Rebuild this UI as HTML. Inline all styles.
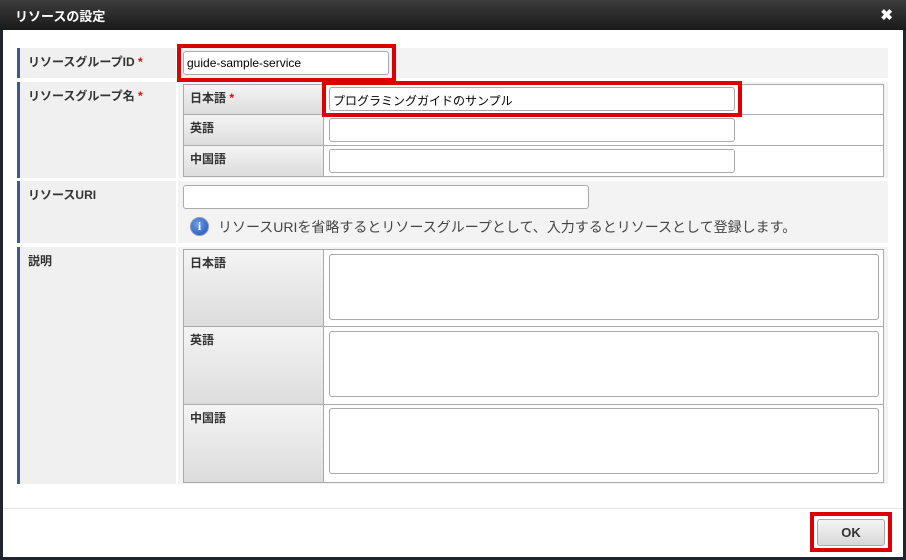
<!DOCTYPE html>
<html><head><meta charset="utf-8"><style>
*{box-sizing:border-box;margin:0;padding:0}
body{width:906px;height:560px;background:#1e2430;position:relative;overflow:hidden;font-family:"Liberation Sans","Noto Sans CJK JP",sans-serif;font-size:12px;color:#333}
.a{position:absolute}
.title{left:0;top:0;width:906px;height:30px;background:linear-gradient(#3c3c3c,#1a1a1a);color:#fff;font-weight:bold;font-size:13px;padding:6px 0 0 15px}
.x{right:13px;top:6px;color:#fff;font-weight:bold;font-size:15px}
.body{left:3px;top:30px;width:900px;height:527px;background:#fff}
.lab{background:#f0f0f0;border-left:3px solid #3b5998;font-weight:bold;color:#333;padding:5px 0 0 8px;font-size:12px}
.val{background:#f3f3f3}
.star{color:#e00}
.in{background:#fff;border:1px solid #aaa;border-radius:3px}
.th{background:linear-gradient(#f4f4f4,#dcdcdc);border:1px solid #aaa;font-weight:bold;padding:4px 0 0 6px;font-size:12px}
.td{background:#fff;border:1px solid #aaa;border-left:none}
.red{border:4px solid #d00}
</style></head><body>
<div class="a title">リソースの設定</div>
<div class="a x">✖</div>
<div class="a body"></div>
<div class="a lab" style="left:17px;top:48px;width:159px;height:30px">リソースグループID <span class="star">*</span></div>
<div class="a val" style="left:178px;top:48px;width:710px;height:30px"></div>
<div class="a in" style="left:183px;top:51px;width:206px;height:24px;padding:4px 3px;font-size:12px;color:#000">guide-sample-service</div>
<div class="a red" style="left:177px;top:44px;width:219px;height:38px"></div>
<div class="a lab" style="left:17px;top:82px;width:159px;height:96px">リソースグループ名 <span class="star">*</span></div>
<div class="a val" style="left:178px;top:82px;width:710px;height:96px"></div>
<div class="a th" style="left:183px;top:84px;width:141px;height:31px">日本語 <span class="star">*</span></div>
<div class="a td" style="left:324px;top:84px;width:560px;height:31px"></div>
<div class="a th" style="left:183px;top:115px;width:141px;height:31px;border-top:none">英語</div>
<div class="a td" style="left:324px;top:115px;width:560px;height:31px;border-top:none"></div>
<div class="a th" style="left:183px;top:146px;width:141px;height:31px;border-top:none">中国語</div>
<div class="a td" style="left:324px;top:146px;width:560px;height:31px;border-top:none"></div>
<div class="a in" style="left:329px;top:87px;width:406px;height:24px;padding:4px 3px;color:#000">プログラミングガイドのサンプル</div>
<div class="a in" style="left:329px;top:118px;width:406px;height:24px"></div>
<div class="a in" style="left:329px;top:149px;width:406px;height:24px"></div>
<div class="a red" style="left:322px;top:81px;width:420px;height:36px"></div>
<div class="a lab" style="left:17px;top:181px;width:159px;height:62px">リソースURI</div>
<div class="a val" style="left:178px;top:181px;width:710px;height:62px"></div>
<div class="a in" style="left:183px;top:185px;width:406px;height:24px"></div>
<div class="a" style="left:190px;top:217px;width:19px;height:19px;border-radius:50%;background:radial-gradient(circle at 40% 35%,#6fa0ea,#1d4fb0);border:1px solid #8899bb;color:#fff;font-weight:bold;font-size:12px;text-align:center;line-height:17px;font-family:'Liberation Serif',serif">i</div>
<div class="a" style="left:218px;top:217px;font-size:14px;color:#444">リソースURIを省略するとリソースグループとして、入力するとリソースとして登録します。</div>
<div class="a lab" style="left:17px;top:247px;width:159px;height:237px">説明</div>
<div class="a val" style="left:178px;top:247px;width:710px;height:237px"></div>
<div class="a th" style="left:183px;top:249px;width:141px;height:78px">日本語</div>
<div class="a td" style="left:324px;top:249px;width:560px;height:78px"></div>
<div class="a th" style="left:183px;top:327px;width:141px;height:78px;border-top:none">英語</div>
<div class="a td" style="left:324px;top:327px;width:560px;height:78px;border-top:none"></div>
<div class="a th" style="left:183px;top:405px;width:141px;height:78px;border-top:none">中国語</div>
<div class="a td" style="left:324px;top:405px;width:560px;height:78px;border-top:none"></div>
<div class="a in" style="left:329px;top:254px;width:550px;height:66px"></div>
<div class="a in" style="left:329px;top:331px;width:550px;height:66px"></div>
<div class="a in" style="left:329px;top:408px;width:550px;height:66px"></div>
<div class="a" style="left:3px;top:508px;width:900px;height:1px;background:#e6e6e6"></div>
<div class="a" style="left:817px;top:519px;width:68px;height:27px;border:1px solid #aaa;border-radius:3px;background:linear-gradient(#f5f5f5,#d8d8d8);text-align:center;font-weight:bold;font-size:13px;line-height:25px;color:#333">OK</div>
<div class="a red" style="left:810px;top:512px;width:82px;height:40px"></div>
</body></html>
